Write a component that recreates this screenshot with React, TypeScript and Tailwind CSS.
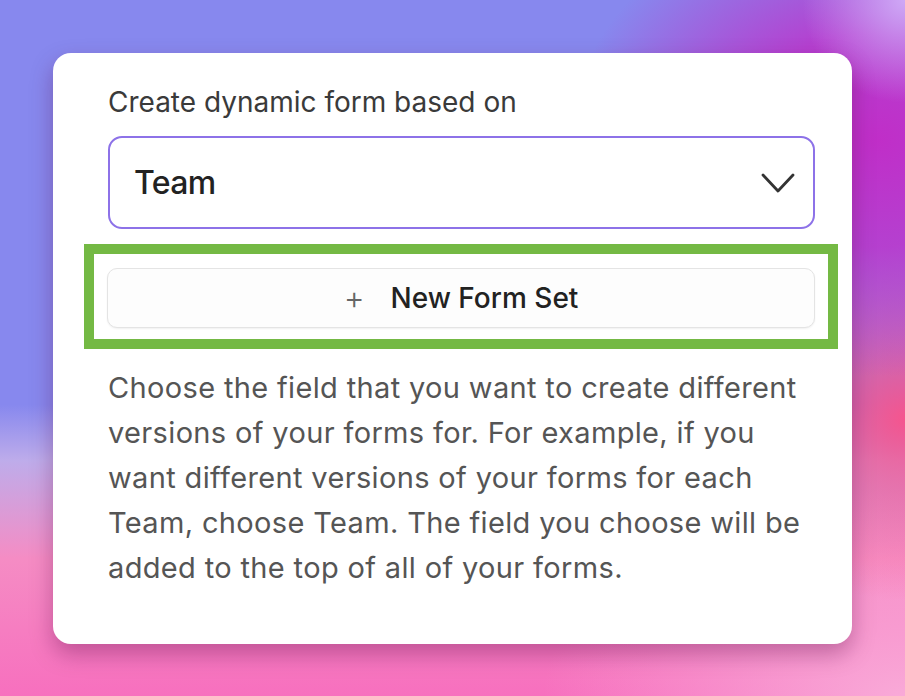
const DESCRIPTION =
  "Choose the field that you want to create different versions of your forms for. For example, if you want different versions of your forms for each Team, choose Team. The field you choose will be added to the top of all of your forms.";

function Chevron() {
  return (
    <svg width="36" height="24" viewBox="0 0 36 24" fill="none" className="text-[#333]">
      <polyline
        points="3,4 18,20 33,4"
        stroke="currentColor"
        strokeWidth="2.8"
        strokeLinecap="round"
        strokeLinejoin="round"
      />
    </svg>
  );
}

export default function App() {
  return (
    <div className="min-h-[696px] w-full overflow-hidden bg-[#8788ee] bg-[radial-gradient(circle_at_100%_0%,#cfa8f6_0%,rgba(207,168,246,0)_9%),radial-gradient(ellipse_34%_34%_at_97%_20%,#c02ec8_0%,rgba(192,46,200,0.8)_45%,rgba(192,46,200,0)_100%),radial-gradient(ellipse_22%_26%_at_100%_60%,#f5558e_0%,rgba(245,85,142,0)_100%),radial-gradient(ellipse_40%_30%_at_100%_100%,#f9aad8_0%,rgba(249,170,216,0)_100%),linear-gradient(to_bottom,rgba(248,112,192,0)_0%,rgba(248,112,192,0)_58%,rgba(196,176,234,0.9)_66%,#f58cc4_80%,#f76fbe_100%)] pl-[53px] pt-[53px] pb-[54px] font-['Inter',sans-serif]">
      <div className="flex w-[799px] flex-col rounded-[18px] bg-white pb-[54px] pl-[55px] pr-[37px] pt-[33px] shadow-[0_10px_22px_rgba(90,10,70,0.35)]">
        <label className="text-[28px] leading-[33px] text-[#3a3a3a]">
          Create dynamic form based on
        </label>

        <button className="mt-[17px] flex h-[93px] items-center justify-between rounded-[14px] border-2 border-[#8d72e8] pl-[24px] pr-[17px] text-left">
          <span className="text-[32px] font-medium tracking-[-0.02em] text-[#222]">
            Team
          </span>
          <Chevron />
        </button>

        <div className="-ml-[24px] -mr-[23px] mt-[15px] border-[10px] border-[#74b944] bg-white px-[13px] pb-[11px] pt-[14px]">
          <button className="flex h-[60px] w-full items-center justify-center gap-[26px] rounded-[10px] border border-[#e4e4e4] bg-[#fdfdfd] shadow-[0_1px_2px_rgba(0,0,0,0.06)]">
            <span className="text-[32px] font-light leading-none text-[#666]">+</span>
            <span className="text-[28px] font-medium text-[#222]">New Form Set</span>
          </button>
        </div>

        <p className="mt-[16px] text-[29px] leading-[45px] tracking-[0.012em] text-[#555]">
          {DESCRIPTION}
        </p>
      </div>
    </div>
  );
}
